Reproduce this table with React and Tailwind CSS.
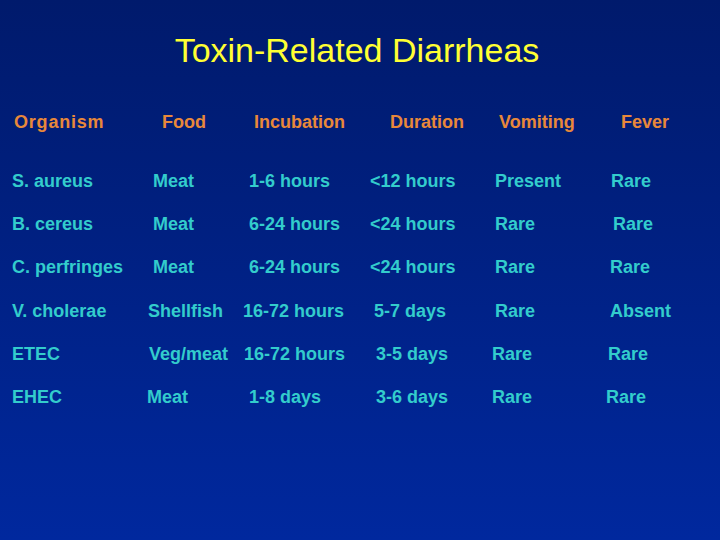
import React from 'react';

// column starts (px from slide edge): 12, 147, 243, 369, 491, 606
const colWidths = ['w-[135px]', 'w-[96px]', 'w-[126px]', 'w-[122px]', 'w-[115px]', 'flex-1'];

const headers = [
  { text: 'Organism', pad: 'pl-[2px] tracking-[0.8px]' },
  { text: 'Food', pad: 'pl-[15px]' },
  { text: 'Incubation', pad: 'pl-[11px]' },
  { text: 'Duration', pad: 'pl-[21px]' },
  { text: 'Vomiting', pad: 'pl-[8px]' },
  { text: 'Fever', pad: 'pl-[15px]' },
];

const rows = [
  [['S. aureus', ''], ['Meat', 'pl-[6px]'], ['1-6 hours', 'pl-[6px]'], ['<12 hours', 'pl-[1px]'], ['Present', 'pl-[4px]'], ['Rare', 'pl-[5px]']],
  [['B. cereus', ''], ['Meat', 'pl-[6px]'], ['6-24 hours', 'pl-[6px]'], ['<24 hours', 'pl-[1px]'], ['Rare', 'pl-[4px]'], ['Rare', 'pl-[7px]']],
  [['C. perfringes', ''], ['Meat', 'pl-[6px]'], ['6-24 hours', 'pl-[6px]'], ['<24 hours', 'pl-[1px]'], ['Rare', 'pl-[4px]'], ['Rare', 'pl-[4px]']],
  [['V. cholerae', ''], ['Shellfish', 'pl-[1px]'], ['16-72 hours', ''], ['5-7 days', 'pl-[5px]'], ['Rare', 'pl-[4px]'], ['Absent', 'pl-[4px]']],
  [['ETEC', ''], ['Veg/meat', 'pl-[2px]'], ['16-72 hours', 'pl-[1px]'], ['3-5 days', 'pl-[7px]'], ['Rare', 'pl-[1px]'], ['Rare', 'pl-[2px]']],
  [['EHEC', ''], ['Meat', ''], ['1-8 days', 'pl-[6px]'], ['3-6 days', 'pl-[7px]'], ['Rare', 'pl-[1px]'], ['Rare', '']],
];

export default function App() {
  return (
    <div className="w-[720px] h-[540px] overflow-hidden bg-gradient-to-b from-[#001a6c] to-[#00289e] font-['Liberation_Sans',Arial,sans-serif] px-[12px]">
      <h1 className="pt-[31px] pr-[6px] text-center text-[34px] leading-[38px] text-[#ffff33] font-normal">
        Toxin-Related Diarrheas
      </h1>

      <div className="mt-[41px] flex text-[18px] leading-[24px] font-bold text-[#e8883a]">
        {headers.map((h, i) => (
          <div key={h.text} className={`${colWidths[i]} ${h.pad} whitespace-nowrap`}>{h.text}</div>
        ))}
      </div>

      <div className="mt-[35px] flex flex-col text-[18px] leading-[24px] font-bold text-[#33cccc]">
        {rows.map((row, r) => (
          <div key={r} className="flex h-[43.2px]">
            {row.map(([text, pad], i) => (
              <div key={i} className={`${colWidths[i]} ${pad} whitespace-nowrap`}>{text}</div>
            ))}
          </div>
        ))}
      </div>
    </div>
  );
}
